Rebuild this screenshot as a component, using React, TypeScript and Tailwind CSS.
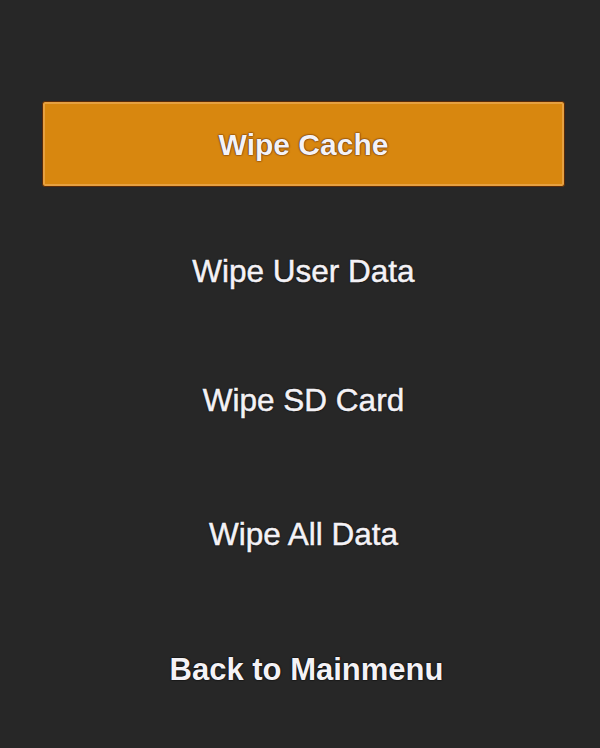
const items = [
  { label: "Wipe Cache", selected: true, gap: "mt-0", text: "text-[30px] font-bold" },
  { label: "Wipe User Data", selected: false, gap: "mt-[42px]", text: "text-[31.5px] [-webkit-text-stroke:0.5px_#f4f2f6]" },
  { label: "Wipe SD Card", selected: false, gap: "mt-[43px]", text: "text-[31.5px] [-webkit-text-stroke:0.5px_#f4f2f6]" },
  { label: "Wipe All Data", selected: false, gap: "mt-[48px]", text: "text-[31.5px] [-webkit-text-stroke:0.5px_#f4f2f6]" },
  { label: "Back to Mainmenu", selected: false, gap: "mt-[49px]", text: "text-[31px] font-bold pl-[6px]" },
];

export default function App() {
  return (
    <div className="w-[600px] h-[748px] bg-[#272727] pt-[101px] font-['Liberation_Sans',Arial,sans-serif]">
      <div className="flex flex-col">
        {items.map((item) => (
          <div
            key={item.label}
            className={`${item.gap} ml-[42px] mr-[35px] h-[86px] flex items-center justify-center ${
              item.selected
                ? "bg-[#d8870f] rounded-[3px] border border-[#5a2a08] shadow-[inset_0_0_0_2px_#e6a040]"
                : ""
            }`}
          >
            <span
              className={`${item.text} text-[#f4f2f6] ${
                item.selected
                  ? "[text-shadow:0_0_2px_#4a1a08,0_0_1px_#4a1a08]"
                  : "[text-shadow:0_0_2px_#000,0_0_1px_#000]"
              }`}
            >
              {item.label}
            </span>
          </div>
        ))}
      </div>
    </div>
  );
}
